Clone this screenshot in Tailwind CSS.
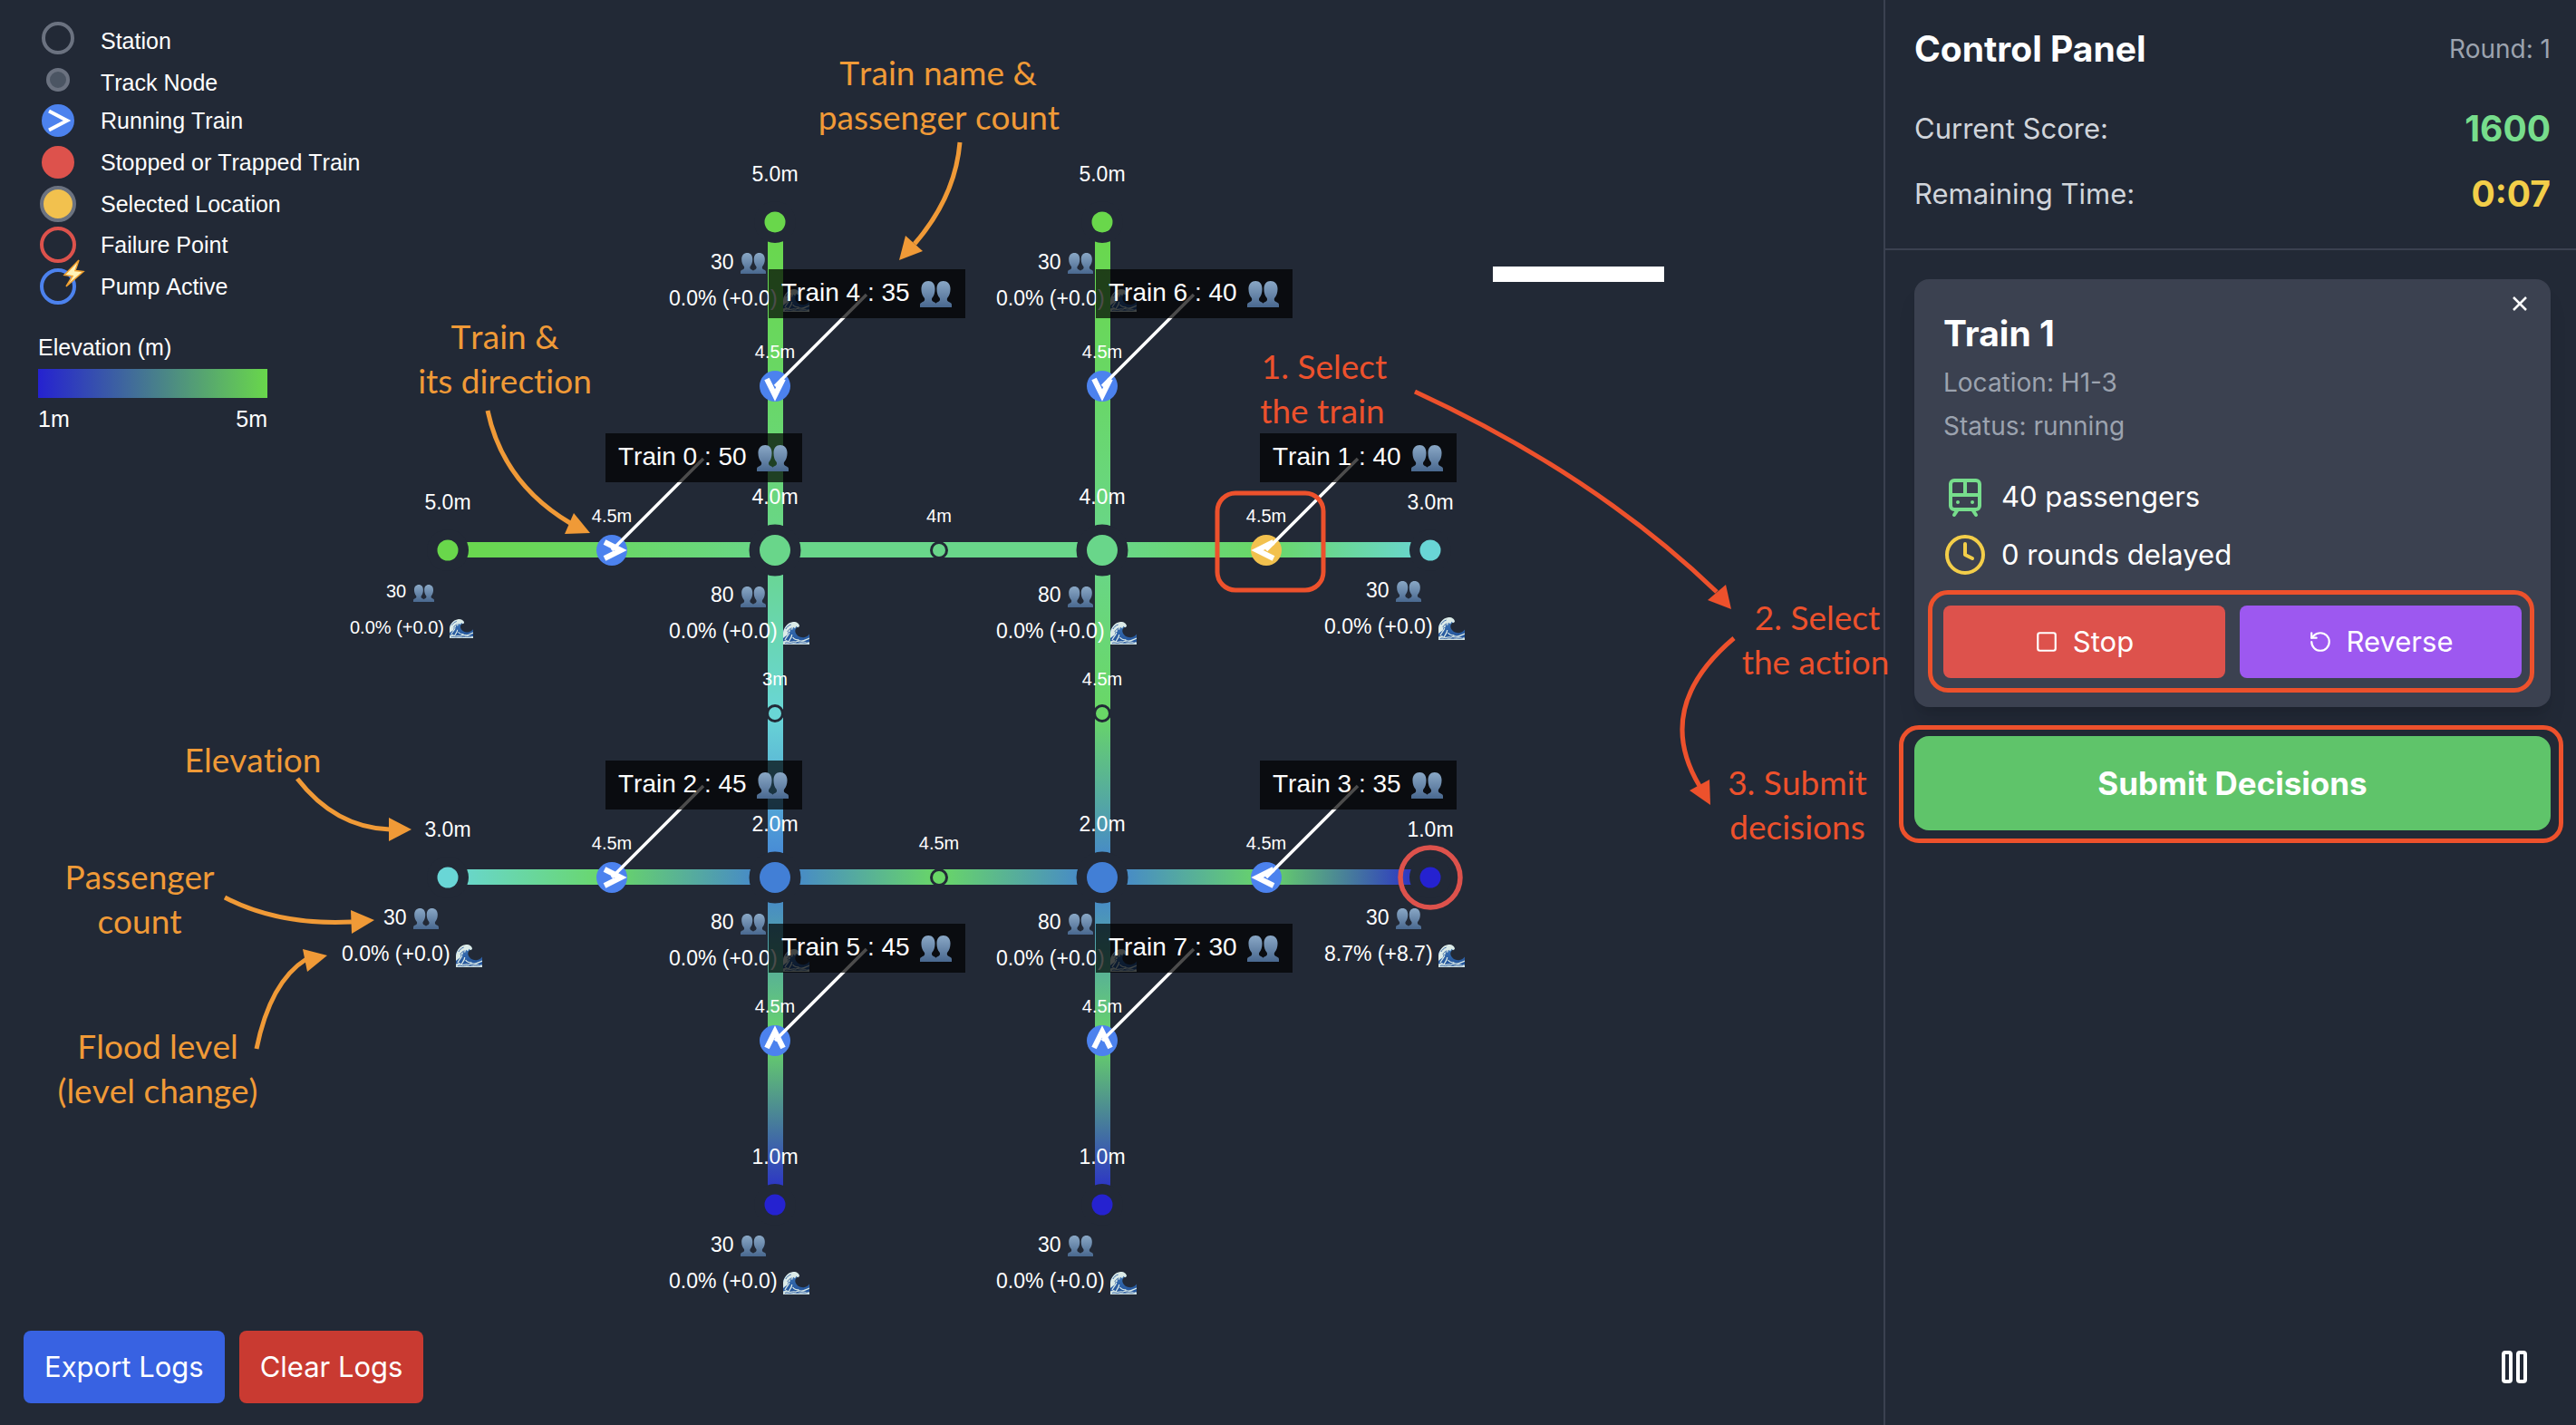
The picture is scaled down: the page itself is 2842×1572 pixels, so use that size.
<!DOCTYPE html>
<html lang="en">
<head>
<meta charset="utf-8">
<meta name="viewport" content="width=device-width, initial-scale=1">
<title>Metro Control</title>
<script src="https://cdn.jsdelivr.net/npm/@tailwindcss/browser@4"></script>
</head>
<body class="bg-[#222936] text-white">
<div class="flex min-h-screen font-['Inter',sans-serif]">

  <main class="relative z-10 flex min-w-0 flex-1 flex-col justify-between">

    <!-- Network map: tracks, stations, trains and guide notes -->
    <svg id="map" class="pointer-events-none absolute inset-0 h-full w-full overflow-visible [font-kerning:none] [font-variant-ligatures:none]" viewBox="0 0 2078 1572" preserveAspectRatio="xMinYMin meet" role="img" aria-label="Rail network map" font-family="Liberation Sans, Arial, sans-serif" fill="#fff">
      <defs>
        <linearGradient id="bust" x1="0" y1="0" x2="0" y2="1">
          <stop offset="0" stop-color="#8aa8c6"/><stop offset="1" stop-color="#49688f"/>
        </linearGradient>
        <linearGradient id="sea" x1="0" y1="0" x2="0" y2="1">
          <stop offset="0" stop-color="#3f78b8"/><stop offset="1" stop-color="#1f4f97"/>
        </linearGradient>
        <symbol id="people" viewBox="0 0 36 30" preserveAspectRatio="none">
          <path fill="url(#bust)" d="M9.500 0C14 0 17 3.500 17 9c0 4.500-1.200 8-3.100 10.200-.9 1.300-.7 3.300.6 4.200 1.300.9 2.900 1.300 3.500 2.300.6-1 2.200-1.400 3.500-2.300 1.300-.9 1.500-2.900.6-4.200C20.200 17 19 13.500 19 9c0-5.500 3-9 7.500-9S34.500 3.500 34.500 9c0 4.500-1.400 8-3.300 10.200-.9 1.300-.7 3.300.6 4.200 1.800 1.100 4.200 1.500 4.200 3.600v3H0v-3c0-2.100 2.400-2.500 4.200-3.600 1.300-.9 1.500-2.900.6-4.200C2.900 17 1.500 13.500 1.500 9c0-5.500 3.500-9 8-9z"/>
        </symbol>
        <symbol id="wave" viewBox="0 0 30 25" preserveAspectRatio="none">
          <path fill="url(#sea)" d="M0 25V10C2 5 6 1.500 11 1c4-.3 7 1.500 7.500 4-3 .5-5.500 3-4.500 6.500 1.300 4 6 6.500 10.500 5.500 2.500-.5 4-1.800 5.500-3.500V25z"/>
          <path fill="#dcebe8" d="M0 12C1 6 5 1 10.500.2 15-.4 18.500 1.800 18.600 5l-2 1.200-1.500-1.500-1.600 2.500-2-1.400-1 3-2.300-.8-.4 3-2.300.6-.6 3L2.500 16 0 18z"/>
          <path fill="none" stroke="#dcebe8" stroke-width="1.300" d="M2 20c2-4 4-5 5-8M6 23c1-4 4-5 4-9M12 22c3 1 5-2 8-1s5-1 10-3M11 17c2 3 5 3 7 3"/>
          <path fill="#cfe0e2" d="M0 25v-3.500l4-1.500 3 2 5-.8 4 1.800 6-1.500 8 1V25z"/>
          <path fill="none" stroke="#2a5a9f" stroke-width=".9" d="M2 23.500c3-1.500 5 1 8-.3s5 1 8 0 6 1 10-.6M3 8c1-2 3-4 6-5M5 11c1-2 3-4 5-4"/>
        </symbol>
        <symbol id="chevron" viewBox="-18 -18 36 36" overflow="visible">
          <path d="M-8-9L10 0L-8 9" fill="none" stroke="#fff" stroke-width="6"/>
        </symbol>
      </defs>

      <rect x="1647" y="294" width="189" height="17"/>

      <g id="tracks"></g>
      <g id="stations"></g>
      <g id="trains"></g>

      <rect x="1343" y="544" width="117" height="107" rx="20" fill="none" stroke="#ed512c" stroke-width="5"/>

      <g fill="#f09a37" font-family="Lato, sans-serif" font-size="37" text-anchor="middle">
        <text x="1035" y="94">Train name &amp;</text>
        <text x="1036" y="143">passenger count</text>
        <text x="557" y="385">Train &amp;</text>
        <text x="557" y="434">its direction</text>
        <text x="279" y="852">Elevation</text>
        <text x="154" y="981">Passenger</text>
        <text x="154" y="1030">count</text>
        <text x="174" y="1168">Flood level</text>
        <text x="174" y="1217">(level change)</text>
      </g>
      <g fill="none" stroke="#f09a37" stroke-width="5">
        <path d="M1059 157Q1054 217 1009 269"/>
        <path d="M538 453Q555 533 629 577"/>
        <path d="M328 859Q370 913 430 915"/>
        <path d="M248 990Q307 1021 388 1017"/>
        <path d="M283 1157Q298 1083 338 1058"/>
      </g>
      <g fill="#f09a37">
        <path d="M992 287L999 260L1018 277z"/>
        <path d="M651 588L633 566L623 589z"/>
        <path d="M454 915L429 902L429 928z"/>
        <path d="M413 1015L387 1004L388 1030z"/>
        <path d="M361 1054L334 1047L339 1072z"/>
      </g>

      <g fill="#ed512c" font-family="Lato, sans-serif" font-size="37" text-anchor="middle">
        <text x="1461" y="418">1. Select</text>
        <text x="1459" y="467">the train</text>
        <text x="2005" y="695">2. Select</text>
        <text x="2003" y="744">the action</text>
        <text x="1983" y="877">3. Submit</text>
        <text x="1983" y="926">decisions</text>
      </g>
      <g fill="none" stroke="#ed512c" stroke-width="5">
        <path d="M1561 432Q1760 524 1894 653"/>
        <path d="M1913 704Q1823 780 1875 867"/>
      </g>
      <g fill="#ed512c">
        <path d="M1910 672L1904 645L1884 662z"/>
        <path d="M1887 888L1886 860L1864 872z"/>
      </g>
    </svg>

    <!-- Legend -->
    <section class="relative w-[340px] pt-[19px] pl-[42px] font-['Liberation_Sans',Arial,sans-serif] text-[25px] leading-[30px] [font-kerning:none]" aria-label="Legend">
      <ul class="grid h-[320px] grid-rows-7">
        <li class="flex items-center gap-[25px]">
          <svg class="size-11 overflow-visible" viewBox="0 0 44 44"><circle cx="22" cy="22" r="16" fill="none" stroke="#6b7280" stroke-width="4"/></svg>
          <span class="pt-[7px] whitespace-nowrap">Station</span>
        </li>
        <li class="flex items-center gap-[25px]">
          <svg class="size-11 overflow-visible" viewBox="0 0 44 44"><circle cx="22" cy="22" r="11" fill="#4b5563" stroke="#6b7280" stroke-width="4"/></svg>
          <span class="pt-[7px] whitespace-nowrap">Track Node</span>
        </li>
        <li class="flex items-center gap-[25px]">
          <svg class="size-11 overflow-visible" viewBox="0 0 44 44"><circle cx="22" cy="22" r="18" fill="#4c82ee"/><path d="M12 11.500L32 22L12 32.500" fill="none" stroke="#fff" stroke-width="4"/></svg>
          <span class="whitespace-nowrap">Running Train</span>
        </li>
        <li class="flex items-center gap-[25px]">
          <svg class="size-11 overflow-visible" viewBox="0 0 44 44"><circle cx="22" cy="22" r="18" fill="#dd524c"/></svg>
          <span class="whitespace-nowrap">Stopped or Trapped Train</span>
        </li>
        <li class="flex items-center gap-[25px]">
          <svg class="size-11 overflow-visible" viewBox="0 0 44 44"><circle cx="22" cy="22" r="18" fill="#f2c14e" stroke="#6b7280" stroke-width="4"/></svg>
          <span class="whitespace-nowrap">Selected Location</span>
        </li>
        <li class="flex items-center gap-[25px]">
          <svg class="size-11 overflow-visible" viewBox="0 0 44 44"><circle cx="22" cy="22" r="18" fill="none" stroke="#dd524c" stroke-width="4"/></svg>
          <span class="whitespace-nowrap">Failure Point</span>
        </li>
        <li class="flex items-center gap-[25px]">
          <svg class="size-11 overflow-visible" viewBox="0 0 44 44"><circle cx="22" cy="22" r="18" fill="none" stroke="#4c82ee" stroke-width="4"/><path d="M45-7L29 9.500L38 10.500L31 22L50 5.500L41 4.500z" fill="#fff3b8" stroke="#f0a030" stroke-width="1.500"/></svg>
          <span class="whitespace-nowrap">Pump Active</span>
        </li>
      </ul>
      <div class="mt-[29px] w-[253px]">
        <p>Elevation (m)</p>
        <div class="mt-[9px] h-8 bg-linear-to-r/srgb from-[#2522d0] to-[#69d74b]"></div>
        <div class="mt-2 flex justify-between"><span>1m</span><span>5m</span></div>
      </div>
    </section>

    <div class="relative flex gap-4 pb-6 pl-[26px] text-[31px] leading-[48px]">
      <button type="button" class="rounded-lg bg-[#3862e2] px-[23px] py-4">Export Logs</button>
      <button type="button" class="rounded-lg bg-[#c93a31] px-[23px] py-4">Clear Logs</button>
    </div>
  </main>

  <aside class="flex w-[764px] shrink-0 flex-col border-l-2 border-[#3b4150]">
    <header class="border-b-2 border-[#3b4150] pt-[26px] pr-7 pb-8 pl-8">
      <div class="flex h-14 items-center justify-between">
        <h1 class="text-[39px] font-bold">Control Panel</h1>
        <span class="text-[28px] text-[#9ca3af]">Round: 1</span>
      </div>
      <dl class="mt-8 flex flex-col gap-4">
        <div class="flex h-14 items-center justify-between">
          <dt class="text-[31px] text-[#d1d5db]">Current Score:</dt>
          <dd class="text-[39px] font-bold text-[#77dd8c]">1600</dd>
        </div>
        <div class="flex h-14 items-center justify-between">
          <dt class="text-[31px] text-[#d1d5db]">Remaining Time:</dt>
          <dd class="text-[39px] font-bold text-[#f3ce49]">0:07</dd>
        </div>
      </dl>
    </header>

    <div class="flex flex-1 flex-col gap-8 pt-8 pr-7 pb-10 pl-8">
      <section class="relative rounded-2xl bg-[#3b4150] p-8 shadow-xl" aria-labelledby="train-title">
        <button type="button" aria-label="Close" class="absolute top-[11px] right-[18px] p-2">
          <svg class="size-4" viewBox="0 0 16 16" fill="none" stroke="#fff" stroke-width="2.500"><path d="M1 1L15 15M15 1L1 15"/></svg>
        </button>
        <h2 id="train-title" class="text-[39px] leading-14 font-bold">Train 1</h2>
        <p class="mt-0.5 text-[28px] leading-12 text-[#9ca3af]">Location: H1-3</p>
        <p class="text-[28px] leading-12 text-[#9ca3af]">Status: running</p>
        <div class="mt-[30px] flex flex-col gap-4 text-[31px]">
          <div class="flex h-12 items-center gap-4">
            <svg class="size-12" viewBox="0 0 24 24" fill="none" stroke="#77dd8c" stroke-width="2" stroke-linecap="round" stroke-linejoin="round"><rect width="16" height="16" x="4" y="3" rx="2"/><path d="M4 11h16M12 3v8M8 19l-2 3M18 22l-2-3M8 15h.01M16 15h.01"/></svg>
            <span>40 passengers</span>
          </div>
          <div class="flex h-12 items-center gap-4">
            <svg class="size-12" viewBox="0 0 24 24" fill="none" stroke="#f3ce49" stroke-width="2" stroke-linecap="round" stroke-linejoin="round"><circle cx="12" cy="12" r="10"/><path d="M12 6v6l4 2"/></svg>
            <span>0 rounds delayed</span>
          </div>
        </div>
        <div class="relative mt-8 grid grid-cols-2 gap-4 text-[31px]">
          <button type="button" class="flex h-20 items-center justify-center gap-4 rounded-lg bg-[#dd524c]">
            <svg class="size-[26px]" viewBox="0 0 24 24" fill="none" stroke="#fff" stroke-width="2" stroke-linecap="round" stroke-linejoin="round"><rect width="18" height="18" x="3" y="3" rx="2"/></svg>
            Stop
          </button>
          <button type="button" class="flex h-20 items-center justify-center gap-4 rounded-lg bg-[#9d58f0]">
            <svg class="size-[26px]" viewBox="0 0 24 24" fill="none" stroke="#fff" stroke-width="2" stroke-linecap="round" stroke-linejoin="round"><path d="M3 12a9 9 0 1 0 9-9 9.750 9.750 0 0 0-6.740 2.740L3 8"/><path d="M3 3v5h5"/></svg>
            Reverse
          </button>
          <div class="pointer-events-none absolute -top-[17px] -right-3.5 -bottom-4 -left-[17px] rounded-[22px] border-5 border-[#ed512c]"></div>
        </div>
      </section>

      <div class="relative">
        <button type="button" class="h-26 w-full rounded-2xl bg-[#5fc46a] text-[35px] font-bold">Submit Decisions</button>
        <div class="pointer-events-none absolute -top-3 -right-3.5 -bottom-3.5 -left-[17px] rounded-[22px] border-5 border-[#ed512c]"></div>
      </div>

      <button type="button" aria-label="Pause" class="mt-auto mr-4 self-end">
        <svg class="size-12" viewBox="0 0 24 24" fill="none" stroke="#fff" stroke-width="2" stroke-linecap="round" stroke-linejoin="round"><rect x="14" y="4" width="4" height="16" rx="1"/><rect x="6" y="4" width="4" height="16" rx="1"/></svg>
      </button>
    </div>
  </aside>
</div>

<script>
  const BG = '#222936';
  const COLORS = { 1: '#2522d0', 2: '#427fd6', 3: '#69d6d6', 4: '#69d68a', 4.5: '#69d766', 5: '#69d74b' };
  const X = [494, 675, 855, 1036, 1216, 1397, 1578];
  const Y = [245, 426, 607, 787, 968, 1148, 1329];

  const lines = [
    { y: Y[2], levels: [5, 4.5, 4, 4, 4, 4.5, 3] },
    { y: Y[4], levels: [3, 4.5, 2, 4.5, 2, 4.5, 1] },
    { x: X[2], levels: [5, 4.5, 4, 3, 2, 4.5, 1] },
    { x: X[4], levels: [5, 4.5, 4, 4.5, 2, 4.5, 1] },
  ];

  // Tracks, coloured by the elevation of the nodes they join
  let defs = '', tracks = '';
  lines.forEach((line, i) => {
    const stops = line.levels.map((l, k) => `<stop offset="${k / 6}" stop-color="${COLORS[l]}"/>`).join('');
    const horizontal = line.y !== undefined;
    defs += `<linearGradient id="track${i}" x1="0" y1="0" x2="${horizontal ? 1 : 0}" y2="${horizontal ? 0 : 1}">${stops}</linearGradient>`;
    tracks += horizontal
      ? `<rect x="${X[0]}" y="${line.y - 9}" width="1084" height="17" fill="url(#track${i})"/>`
      : `<rect x="${line.x - 8}" y="${Y[0]}" width="17" height="1084" fill="url(#track${i})"/>`;
  });
  document.getElementById('tracks').innerHTML = `<defs>${defs}</defs>${tracks}`;

  const mid = (x, y, l) => `
    <circle cx="${x}" cy="${y}" r="8.5" fill="${COLORS[l]}" stroke="${BG}" stroke-width="3"/>
    <text x="${x}" y="${y - 31}" font-size="20" text-anchor="middle">${l}m</text>`;

  const station = (x, y, l, people, flood = '0.0% (+0.0)', small = false) => {
    const hub = people === 80, dy = hub ? 6 : 0;
    const size = small ? 20 : 23;
    return `
    <circle cx="${x}" cy="${y}" r="${hub ? 28.5 : 23}" fill="${BG}"/>
    <circle cx="${x}" cy="${y}" r="${hub ? 17 : 11.5}" fill="${COLORS[l]}"/>
    <text x="${x}" y="${y - 45 - dy}" font-size="23" text-anchor="middle">${l}.0m</text>
    <text x="${x - (small ? 68 : 71)}" y="${y + 52 + (hub ? 5 : 0)}" font-size="${size}">${people}</text>
    <use href="#people" x="${x - 38}" y="${y + (small ? 38 : 34) + dy}" width="${small ? 23 : 28}" height="${small ? 19 : 23}"/>
    <text x="${x - (small ? 108 : 117)}" y="${y + 92 + (hub ? 5 : 0)}" font-size="${size}">${flood}</text>
    <use href="#wave" x="${x + (small ? 2 : 9)}" y="${y + (small ? 76 : 74) + (hub ? 5 : 0)}" width="${small ? 26 : 29}" height="${small ? 21 : 25}"/>`;
  };

  document.getElementById('stations').innerHTML = [
    mid(X[3], Y[2], 4), mid(X[3], Y[4], 4.5), mid(X[2], Y[3], 3), mid(X[4], Y[3], 4.5),
    station(X[2], Y[0], 5, 30), station(X[4], Y[0], 5, 30),
    station(X[0], Y[2], 5, 30, '0.0% (+0.0)', true),
    station(X[2], Y[2], 4, 80), station(X[4], Y[2], 4, 80),
    station(X[6], Y[2], 3, 30),
    station(X[0], Y[4], 3, 30),
    station(X[2], Y[4], 2, 80), station(X[4], Y[4], 2, 80),
    station(X[6], Y[4], 1, 30, '8.7% (+8.7)'),
    station(X[2], Y[6], 1, 30), station(X[4], Y[6], 1, 30),
    `<circle cx="${X[6]}" cy="${Y[4]}" r="33" fill="none" stroke="#dd524c" stroke-width="5.5"/>`,
  ].join('');

  const trains = [
    { id: 4, x: X[2], y: Y[1], turn: 90, people: 35 },
    { id: 6, x: X[4], y: Y[1], turn: 90, people: 40 },
    { id: 0, x: X[1], y: Y[2], turn: 0, people: 50 },
    { id: 1, x: X[5], y: Y[2], turn: 180, people: 40, selected: true },
    { id: 2, x: X[1], y: Y[4], turn: 0, people: 45 },
    { id: 3, x: X[5], y: Y[4], turn: 180, people: 35 },
    { id: 5, x: X[2], y: Y[5], turn: 270, people: 45 },
    { id: 7, x: X[4], y: Y[5], turn: 270, people: 30 },
  ];
  document.getElementById('trains').innerHTML = trains.map(t => `
    <g transform="translate(${t.x} ${t.y})">
      <circle r="17" fill="${t.selected ? '#f2c14e' : '#4c82ee'}"/>
      <use href="#chevron" x="-18" y="-18" width="36" height="36" transform="rotate(${t.turn})"/>
      <text y="-31" font-size="20" text-anchor="middle">4.5m</text>
      <path d="M0 0L101-101" stroke="#fff" stroke-width="3.500"/>
      <rect x="-7" y="-129" width="217" height="54" fill="#000" fill-opacity=".7"/>
      <text x="7" y="-94" font-size="28">Train ${t.id} : ${t.people}</text>
      <use href="#people" x="160" y="-116" width="35" height="29"/>
    </g>`).join('');
</script>
</body>
</html>
